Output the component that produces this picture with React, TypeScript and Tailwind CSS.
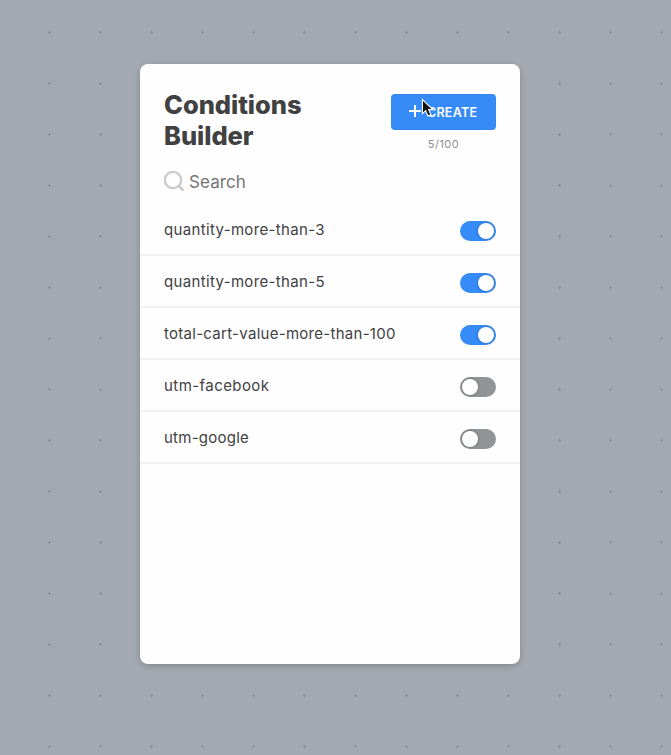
const conditions = [
  { name: "quantity-more-than-3", on: true, spacing: "tracking-[0.34px]" },
  { name: "quantity-more-than-5", on: true, spacing: "tracking-[0.34px]" },
  { name: "total-cart-value-more-than-100", on: true, spacing: "tracking-[0.28px]" },
  { name: "utm-facebook", on: false, spacing: "tracking-[0.43px]" },
  { name: "utm-google", on: false, spacing: "tracking-[0.25px]" },
];

function Toggle({ on }: { on: boolean }) {
  return (
    <span
      className={`mt-1 flex h-5 w-9 items-center rounded-full px-[2px] ${
        on ? "justify-end bg-[#368bf6]" : "justify-start bg-[#919497]"
      }`}
    >
      <span className="size-4 rounded-full bg-white shadow-[0_0_3px_rgba(0,0,0,0.3)]" />
    </span>
  );
}

function Cursor() {
  return (
    <svg className="absolute left-[30px] top-[4px]" width="16" height="22" viewBox="0 0 16 22">
      <path
        d="M1.4 1.5V15.6L4.7 12.6L6.9 18L9.9 16.8L7.7 11.6H11.8Z"
        fill="#111"
        stroke="#fff"
        strokeWidth="1.1"
      />
    </svg>
  );
}

export default function App() {
  return (
    <div className="relative h-[755px] w-[671px] overflow-hidden bg-[#a4a9b1] pl-[140px] pt-16 font-['Inter','Liberation_Sans',sans-serif] text-[#414142]">
      <svg className="absolute inset-0" width="671" height="755">
        <defs>
          <pattern id="grid" x="24" y="7" width="51" height="51" patternUnits="userSpaceOnUse">
            <path d="M24 25.5h3M25.5 24v3" stroke="#8b9095" strokeWidth="1" />
          </pattern>
        </defs>
        <rect width="671" height="755" fill="url(#grid)" />
      </svg>
      <main className="relative h-[600px] w-[380px] rounded-lg bg-[#fefefe] shadow-[0_2px_6px_rgba(0,0,0,0.2)]">
        <header className="flex h-[98px] items-start justify-between px-6 pt-[25px]">
          <h1 className="text-[25.5px] font-extrabold leading-[31px] tracking-[-0.05px]">
            Conditions
            <br />
            Builder
          </h1>
          <div className="flex flex-col items-center pt-[5px]">
            <button className="relative flex h-9 w-[105px] items-center rounded bg-[#368bf6] pl-[18px] text-[12.5px] font-semibold text-white">
              <svg className="mb-[2px] mr-[6px] shrink-0" width="12" height="12" viewBox="0 0 12 12">
                <path d="M0 6h12M6 0v12" stroke="white" strokeWidth="2" />
              </svg>
              <span className="mt-[2px] tracking-[0.25px]">CREATE</span>
              <Cursor />
            </button>
            <span className="mt-[6px] text-[11px] leading-4 tracking-[0.5px] text-[#8f8f8f]">5/100</span>
          </div>
        </header>
        <div className="flex h-[42px] items-center pl-6">
          <svg className="mb-1 shrink-0" width="21" height="22" viewBox="0 0 21 22" fill="none" stroke="#cacaca" strokeWidth="2.2">
            <circle cx="9" cy="10" r="8.2" />
            <path d="M15 16l4.5 4.5" strokeWidth="2.5" />
          </svg>
          <span className="mb-[2px] ml-1 text-[17px] leading-5 tracking-[0.1px] text-[#757575]">Search</span>
        </div>
        <ul>
          {conditions.map((c) => (
            <li key={c.name} className="flex h-[52px] items-center justify-between border-b-2 border-[#f1f1f2] px-6">
              <span className={`mt-[2px] text-[15px] leading-5 ${c.spacing}`}>{c.name}</span>
              <Toggle on={c.on} />
            </li>
          ))}
        </ul>
      </main>
    </div>
  );
}
